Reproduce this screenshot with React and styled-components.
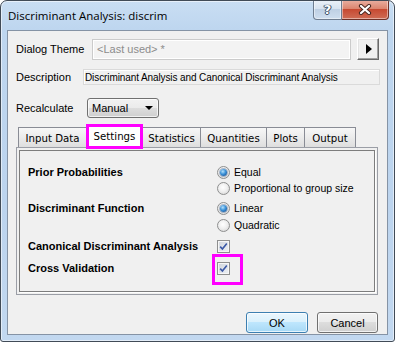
import React from "react";
import styled, { createGlobalStyle } from "styled-components";

const GlobalStyle = createGlobalStyle`
  html, body { margin: 0; padding: 0; background: #ffffff; }
  body { font-family: "Liberation Sans", Arial, sans-serif; font-size: 11px; color: #000; }
  * { box-sizing: border-box; }
`;

const Window = styled.div`
  width: 395px;
  height: 342px;
  border: 1px solid #414b57;
  border-radius: 7px 7px 3px 3px;
  background: linear-gradient(180deg, #c9def3 0px, #bed6ef 28px, #bcd4ee 60%, #c2d8f0 100%);
  box-shadow: inset 0 0 0 1px rgba(255, 255, 255, 0.55);
  padding: 0 6px 6px 6px;
  display: flex;
  flex-direction: column;
  overflow: hidden;
`;

const TitleBar = styled.div`
  height: 29px;
  display: flex;
  align-items: flex-start;
  justify-content: space-between;
`;

const TitleText = styled.div`
  padding: 7px 0 0 1px;
  font-family: "Open Sans", "Noto Sans", sans-serif;
  font-size: 11.5px;
  line-height: 15px;
  color: #000;
`;

const CaptionButtons = styled.div`
  display: flex;
  margin-right: -1px;
  margin-top: -1px;
`;

const CaptionButton = styled.div`
  width: ${(p) => p.$w}px;
  height: 20px;
  display: flex;
  align-items: center;
  justify-content: center;
  border: 1px solid ${(p) => (p.$close ? "#6e3128" : "#6f7d90")};
  border-top: none;
  ${(p) => (p.$close ? "border-left: none;" : "")}
  border-radius: ${(p) => (p.$close ? "0 0 4px 0" : "0 0 0 4px")};
  background: ${(p) =>
    p.$close
      ? "linear-gradient(180deg, #eab0a2 0%, #dc8670 45%, #c74a32 50%, #cf6c55 100%)"
      : "linear-gradient(180deg, #ecf2f9 0%, #d8e3f0 45%, #bfd0e4 50%, #cfdeef 100%)"};
  box-shadow: inset 0 0 0 1px rgba(255, 255, 255, 0.45);
`;

const HelpGlyph = styled.span`
  font-family: "DejaVu Sans", sans-serif;
  font-weight: bold;
  font-size: 13px;
  line-height: 13px;
  color: #fff;
  text-shadow: 0 0 1px #33425a, 0 0 1px #33425a, 1px 0 0 #4a5a74, -1px 0 0 #4a5a74, 0 1px 0 #4a5a74;
  margin-top: -1px;
`;

const Client = styled.div`
  flex: 1;
  border: 1px solid #8593a5;
  background: #f0f0f0;
  display: flex;
  flex-direction: column;
`;

const FieldRow = styled.div`
  display: flex;
  align-items: center;
  height: ${(p) => p.$h}px;
  margin-top: ${(p) => p.$mt}px;
  padding-left: 8px;
`;

const Label = styled.div`
  width: ${(p) => p.$w}px;
  flex: none;
  font-size: 11px;
`;

const ThemeBox = styled.div`
  width: 259px;
  height: 21px;
  border: 1px solid #cbcbcb;
  box-shadow: inset 0 0 0 1px #ffffff;
  background: #f3f3f3;
  color: #8c8c8c;
  padding-left: 4px;
  display: flex;
  align-items: center;
  font-size: 11px;
`;

const ArrowButton = styled.div`
  width: 22px;
  height: 22px;
  margin-left: 6px;
  border: 1px solid;
  border-color: #ffffff #696969 #696969 #ffffff;
  box-shadow: inset -1px -1px 0 #a0a0a0, inset 1px 1px 0 #e3e3e3;
  background: #f0f0f0;
  display: flex;
  align-items: center;
  justify-content: center;
  &::before {
    content: "";
    width: 0;
    height: 0;
    border-top: 5px solid transparent;
    border-bottom: 5px solid transparent;
    border-left: 6px solid #000;
    margin-left: 2px;
  }
`;

const DescBox = styled.div`
  width: 297px;
  height: 16px;
  border: 1px solid #dadada;
  box-shadow: inset 1px 1px 0 #ffffff;
  background: #f0f0f0;
  padding-left: 1px;
  display: flex;
  align-items: center;
  font-size: 10px;
  letter-spacing: -0.1px;
  white-space: nowrap;
  overflow: hidden;
`;

const Select = styled.div`
  width: 72px;
  height: 20px;
  border: 1px solid #707070;
  border-radius: 3px;
  background: linear-gradient(180deg, #f2f2f2 0%, #ebebeb 50%, #dddddd 50%, #cfcfcf 100%);
  box-shadow: inset 0 0 0 1px rgba(255, 255, 255, 0.7);
  display: flex;
  align-items: center;
  padding-left: 4px;
  font-size: 11px;
  &::after {
    content: "";
    margin-left: auto;
    margin-right: 5px;
    width: 0;
    height: 0;
    border-left: 4px solid transparent;
    border-right: 4px solid transparent;
    border-top: 4px solid #000;
  }
`;

const TabStrip = styled.div`
  display: flex;
  align-items: flex-end;
  height: 23px;
  margin-top: 6px;
  padding-left: 10px;
  position: relative;
  z-index: 1;
`;

const Tab = styled.div`
  width: ${(p) => p.$w}px;
  margin-left: -1px;
  height: ${(p) => (p.$active ? 25 : 20)}px;
  margin-bottom: ${(p) => (p.$active ? -2 : 0)}px;
  border: ${(p) => (p.$active ? "3px solid #ff00ff" : "1px solid #898c95")};
  ${(p) => (p.$active ? "" : "border-bottom: none;")}
  background: ${(p) => (p.$active ? "#ffffff" : "linear-gradient(180deg, #f7f7f7 0%, #ebebeb 50%, #dedede 100%)")};
  display: flex;
  align-items: center;
  justify-content: center;
  padding-top: ${(p) => (p.$active ? 0 : 1)}px;
  font-family: "DejaVu Sans", Tahoma, sans-serif;
  font-size: 10.2px;
  position: relative;
  z-index: ${(p) => (p.$active ? 2 : 1)};
  &:first-child { margin-left: 0; }
`;

const Panel = styled.div`
  margin-left: 8px;
  width: 362px;
  height: 148px;
  border: 1px solid #9b9ea6;
  padding: 2px;
  background: #f0f0f0;
`;

const GroupBox = styled.div`
  height: 100%;
  border: 1px solid #7d7d7d;
  box-shadow: 1px 1px 0 #ffffff;
  padding: 13px 0 0 8px;
  display: flex;
  flex-direction: column;
`;

const OptRow = styled.div`
  display: grid;
  grid-template-columns: 189px 1fr;
  align-items: center;
  height: 16px;
  margin-top: ${(p) => p.$mt || 0}px;
`;

const OptLabel = styled.div`
  font-weight: bold;
  font-size: 11px;
  white-space: nowrap;
`;

const Control = styled.div`
  display: flex;
  align-items: center;
  gap: 4px;
  font-size: 10.5px;
`;

const Radio = styled.span`
  width: 13px;
  height: 13px;
  border-radius: 50%;
  border: 1px solid #8e8f8f;
  background: radial-gradient(circle at 45% 40%, #ffffff 0%, #f0f0f0 45%, #cfcfcf 100%);
  display: flex;
  align-items: center;
  justify-content: center;
  flex: none;
  &::after {
    content: "";
    display: ${(p) => (p.$checked ? "block" : "none")};
    width: 7px;
    height: 7px;
    border-radius: 50%;
    background: radial-gradient(circle at 40% 35%, #b5e1fb 0%, #3c92d8 45%, #0f3f82 100%);
    box-shadow: 0 0 0 1px rgba(30, 70, 120, 0.35);
  }
`;

const CheckWrap = styled.span`
  position: relative;
  display: inline-flex;
  ${(p) =>
    p.$highlight
      ? `&::after {
    content: "";
    position: absolute;
    left: -5px;
    top: -8px;
    width: 25px;
    height: 25px;
    border: 3px solid #ff00ff;
  }`
      : ""}
`;

const CheckBox = styled.span`
  width: 13px;
  height: 13px;
  border: 1px solid #8e8f8f;
  background: linear-gradient(135deg, #cfd4dc 0%, #eef1f5 100%);
  box-shadow: inset 0 0 0 1px #f6f6f6;
  display: flex;
  align-items: center;
  justify-content: center;
`;

const ButtonRow = styled.div`
  display: flex;
  justify-content: flex-end;
  gap: 9px;
  margin-top: 17px;
  padding-right: 9px;
`;

const PushButton = styled.div`
  width: ${(p) => p.$w}px;
  height: 21px;
  border-radius: 3px;
  border: 1px solid ${(p) => (p.$default ? "#3c7fb1" : "#707070")};
  background: ${(p) =>
    p.$default
      ? "linear-gradient(180deg, #eaf6fd 0%, #d9f0fc 50%, #bee6fd 50%, #a7d9f5 100%)"
      : "linear-gradient(180deg, #f2f2f2 0%, #ebebeb 50%, #dddddd 50%, #cfcfcf 100%)"};
  box-shadow: inset 0 0 0 1px rgba(255, 255, 255, 0.7);
  display: flex;
  align-items: center;
  justify-content: center;
  font-size: 11px;
`;

const CloseIcon = () => (
  <svg width="14" height="11" viewBox="0 0 14 11">
    <path d="M3 2 L11 9 M11 2 L3 9" stroke="#4a2a24" strokeWidth="4.2" strokeLinecap="round" />
    <path d="M3 2 L11 9 M11 2 L3 9" stroke="#ffffff" strokeWidth="2.2" strokeLinecap="round" />
  </svg>
);

const CheckMark = () => (
  <svg width="9" height="9" viewBox="0 0 9 9">
    <path d="M1.2 4.6 L3.4 7 L7.8 1.4" fill="none" stroke="#3b59a6" strokeWidth="1.6" />
  </svg>
);

const tabs = [
  { name: "Input Data", w: 69 },
  { name: "Settings", w: 57, active: true },
  { name: "Statistics", w: 59 },
  { name: "Quantities", w: 67 },
  { name: "Plots", w: 39 },
  { name: "Output", w: 52 },
];

export default function App() {
  return (
    <>
      <GlobalStyle />
      <Window>
        <TitleBar>
          <TitleText>Discriminant Analysis: discrim</TitleText>
          <CaptionButtons>
            <CaptionButton $w={29}>
              <HelpGlyph>?</HelpGlyph>
            </CaptionButton>
            <CaptionButton $w={47} $close>
              <CloseIcon />
            </CaptionButton>
          </CaptionButtons>
        </TitleBar>
        <Client>
          <FieldRow $h={22} $mt={7}>
            <Label $w={76}>Dialog Theme</Label>
            <ThemeBox>&lt;Last used&gt; *</ThemeBox>
            <ArrowButton />
          </FieldRow>
          <FieldRow $h={16} $mt={9}>
            <Label $w={67}>Description</Label>
            <DescBox>Discriminant Analysis and Canonical Discriminant Analysis</DescBox>
          </FieldRow>
          <FieldRow $h={20} $mt={13}>
            <Label $w={71}>Recalculate</Label>
            <Select>Manual</Select>
          </FieldRow>
          <TabStrip>
            {tabs.map((t) => (
              <Tab key={t.name} $w={t.w} $active={t.active}>
                {t.name}
              </Tab>
            ))}
          </TabStrip>
          <Panel>
            <GroupBox>
              <OptRow>
                <OptLabel>Prior Probabilities</OptLabel>
                <Control>
                  <Radio $checked />
                  Equal
                </Control>
              </OptRow>
              <OptRow>
                <span />
                <Control>
                  <Radio />
                  Proportional to group size
                </Control>
              </OptRow>
              <OptRow $mt={4}>
                <OptLabel>Discriminant Function</OptLabel>
                <Control>
                  <Radio $checked />
                  Linear
                </Control>
              </OptRow>
              <OptRow $mt={1}>
                <span />
                <Control>
                  <Radio />
                  Quadratic
                </Control>
              </OptRow>
              <OptRow $mt={5}>
                <OptLabel>Canonical Discriminant Analysis</OptLabel>
                <Control>
                  <CheckWrap>
                    <CheckBox>
                      <CheckMark />
                    </CheckBox>
                  </CheckWrap>
                </Control>
              </OptRow>
              <OptRow $mt={6}>
                <OptLabel>Cross Validation</OptLabel>
                <Control>
                  <CheckWrap $highlight>
                    <CheckBox>
                      <CheckMark />
                    </CheckBox>
                  </CheckWrap>
                </Control>
              </OptRow>
            </GroupBox>
          </Panel>
          <ButtonRow>
            <PushButton $w={62} $default>OK</PushButton>
            <PushButton $w={61}>Cancel</PushButton>
          </ButtonRow>
        </Client>
      </Window>
    </>
  );
}
